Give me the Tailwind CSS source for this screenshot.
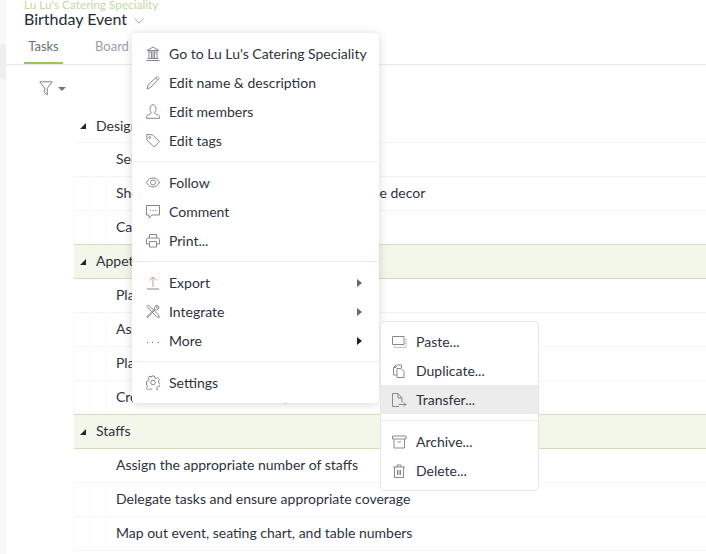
<!DOCTYPE html>
<html lang="en">
<head>
  <meta charset="UTF-8">
  <title>Birthday Event</title>
  <script src="https://cdn.jsdelivr.net/npm/@tailwindcss/browser@4"></script>
</head>
<body class="bg-white overflow-hidden font-['Lato','Noto_Sans',sans-serif] text-[14px] text-[#2c3340]">
  <div class="relative w-[706px] h-[554px] overflow-hidden flex">
    <!-- left strip -->
    <div class="w-[6px] h-full bg-[#f8f8f8] shrink-0 pt-[44px]">
      <div class="h-[35px] bg-[#eeeeee]"></div>
    </div>

    <div class="flex-1 min-w-0">
      <!-- header -->
      <div class="pl-[18px] h-[34px] relative">
        <div class="text-[11.8px] leading-[12px] text-[#c3d9a3] -mt-px">Lu Lu's Catering Speciality</div>
        <div class="flex items-center gap-[7px] text-[16px] leading-[20px] -mt-[2px] text-[#232a36]">
          <span>Birthday Event</span>
          <svg class="mt-[3px]" width="10" height="6" viewBox="0 0 10 6" fill="none" stroke="#9fb0c0" stroke-width="1"><path d="M.5.5 5 5 9.500.5"/></svg>
        </div>
      </div>

      <!-- tabs -->
      <div class="flex pl-[18px] h-[32px] border-b border-[#e9e9e9] text-[13px]">
        <div class="w-[39px] h-[31px] text-center leading-[26px] text-[#69707a] border-b-2 border-[#9ac558]">Tasks</div>
        <div class="ml-[32px] leading-[26px] text-[#9a9fae]">Board</div>
      </div>

      <!-- filter -->
      <div class="h-[44px] pl-[33px] pt-[16px] flex items-start gap-[5px]">
        <svg width="14" height="15" viewBox="0 0 14 15" fill="none" stroke="#7d828c" stroke-width="1"><path d="M.8.800h12.400L8.300 7.200v6.600L5.700 12V7.200z"/></svg>
        <svg class="mt-[6px]" width="8" height="4" viewBox="0 0 8 4" fill="#6f7480"><path d="M0 0h8L4 4z"/></svg>
      </div>

      <!-- task list -->
      <div class="ml-[68px]">
        <div class="flex items-center h-[34px] border-b border-[#f4f4f4]">
          <svg class="ml-[6px] mr-[10px]" width="6" height="6" viewBox="0 0 6 6" fill="#20262e"><path d="M6 0v6H0z"/></svg>
          <span>Design</span>
        </div>
        <div class="flex items-center h-[34px] border-b border-[#f4f4f4]"><span class="ml-[42px] -mt-[2px]">Select the event theme</span></div>
        <div class="flex items-center h-[34px] border-b border-[#f4f4f4]"><div class="w-[17px] h-[31px] self-end border-x border-[#f8f8f8]"></div><div class="w-[16px] h-[31px] self-end border-r border-[#f8f8f8]"></div><span class="ml-[9px] -mt-[2px]">Shop for table settings, linens and any of the decor</span></div>
        <div class="flex items-center h-[33px]"><div class="w-[17px] h-[31px] self-end border-x border-[#f8f8f8]"></div><div class="w-[16px] h-[31px] self-end border-r border-[#f8f8f8]"></div><span class="ml-[9px] -mt-[2px]">Call the florist</span></div>

        <div class="flex items-center h-[35px] bg-[#f2f7ea] border-y border-[#cfe0b5]">
          <svg class="ml-[6px] mr-[10px]" width="6" height="6" viewBox="0 0 6 6" fill="#20262e"><path d="M6 0v6H0z"/></svg>
          <span class="-mt-[2px]">Appetizers</span>
        </div>
        <div class="flex items-center h-[34px] border-b border-[#f4f4f4]"><span class="ml-[42px] -mt-[2px]">Plan the menu</span></div>
        <div class="flex items-center h-[34px] border-b border-[#f4f4f4]"><div class="w-[17px] h-[31px] self-end border-x border-[#f8f8f8]"></div><div class="w-[16px] h-[31px] self-end border-r border-[#f8f8f8]"></div><span class="ml-[9px] -mt-[2px]">Assign the cooks</span></div>
        <div class="flex items-center h-[34px] border-b border-[#f4f4f4]"><div class="w-[17px] h-[31px] self-end border-x border-[#f8f8f8]"></div><div class="w-[16px] h-[31px] self-end border-r border-[#f8f8f8]"></div><span class="ml-[9px] -mt-[2px]">Plate the food</span></div>
        <div class="flex items-center h-[33px]"><div class="w-[17px] h-[31px] self-end border-x border-[#f8f8f8]"></div><div class="w-[16px] h-[31px] self-end border-r border-[#f8f8f8]"></div><span class="ml-[9px] -mt-[2px]">Create the bar and wine list, with more</span></div>

        <div class="flex items-center h-[35px] bg-[#f2f7ea] border-y border-[#cfe0b5]">
          <svg class="ml-[6px] mr-[10px]" width="6" height="6" viewBox="0 0 6 6" fill="#20262e"><path d="M6 0v6H0z"/></svg>
          <span class="-mt-[2px]">Staffs</span>
        </div>
        <div class="flex items-center h-[34px] border-b border-[#f4f4f4]"><span class="ml-[42px] -mt-[2px]">Assign the appropriate number of staffs</span></div>
        <div class="flex items-center h-[34px] border-b border-[#f4f4f4]"><div class="w-[17px] h-[31px] self-end border-x border-[#f8f8f8]"></div><div class="w-[16px] h-[31px] self-end border-r border-[#f8f8f8]"></div><span class="ml-[9px] -mt-[2px]">Delegate tasks and ensure appropriate coverage</span></div>
        <div class="flex items-center h-[34px] border-b border-[#f4f4f4]"><div class="w-[17px] h-[31px] self-end border-x border-[#f8f8f8]"></div><div class="w-[16px] h-[31px] self-end border-r border-[#f8f8f8]"></div><span class="ml-[9px] -mt-[2px]">Map out event, seating chart, and table numbers</span></div>
      </div>
    </div>

    <!-- main menu -->
    <div class="absolute left-[132px] top-[33px] w-[247px] h-[370px] bg-white rounded-[4px] shadow-[0_1px_10px_rgba(0,0,0,0.16)] pt-[6px]">
      <div class="flex items-center h-[29px]">
        <svg class="ml-[14px] mr-[9px]" width="14" height="15" viewBox="0 0 14 15" fill="none" stroke="#85898f" stroke-width="1"><path d="M1 4.500 7 1l6 3.500zM2 6h10M3 6v6M5.500 6v6M8.500 6v6M11 6v6M1.500 12.500h11M.5 14.500h13"/><path stroke="#a7759a" d="M7 7v5"/></svg>
        <span>Go to Lu Lu's Catering Speciality</span>
      </div>
      <div class="flex items-center h-[29px]">
        <svg class="ml-[14px] mr-[9px]" width="14" height="15" viewBox="0 0 14 15" fill="none" stroke="#85898f" stroke-width="1"><path d="M11 1.500 13 3.500 4.500 12.500 1 14l1-3.800zM9.500 3l2 2"/></svg>
        <span>Edit name &amp; description</span>
      </div>
      <div class="flex items-center h-[29px]">
        <svg class="ml-[14px] mr-[9px]" width="14" height="15" viewBox="0 0 14 15" fill="none" stroke="#85898f" stroke-width="1"><path d="M4 5c0-2.600 1.300-4.300 3-4.300S10 2.400 10 5c0 2-1.300 2.800-1.300 4 0 1.500 4.800 1.300 4.800 3.500v1.800H.5v-1.800C.5 10.300 5.300 10.500 5.300 9 5.300 7.800 4 7 4 5z"/></svg>
        <span>Edit members</span>
      </div>
      <div class="flex items-center h-[29px]">
        <svg class="ml-[14px] mr-[9px]" width="14" height="15" viewBox="0 0 14 15" fill="none" stroke="#85898f" stroke-width="1"><path d="M.7 1.500 6.500 1.800l7 6.700-5.200 5.500-7.300-7z"/><circle cx="3.700" cy="4.500" r="1"/></svg>
        <span>Edit tags</span>
      </div>
      <div class="h-[7px] mb-[6px] border-b border-[#ededed]"></div>

      <div class="flex items-center h-[29px]">
        <svg class="ml-[14px] mr-[9px]" width="14" height="15" viewBox="0 0 14 15" fill="none" stroke="#85898f" stroke-width="1"><path d="M.5 7.500C2.200 4.500 4.400 3 7 3s4.800 1.500 6.500 4.500C11.800 10.500 9.600 12 7 12S2.200 10.500.5 7.500z"/><circle cx="7" cy="7.500" r="2.500"/></svg>
        <span>Follow</span>
      </div>
      <div class="flex items-center h-[29px]">
        <svg class="ml-[14px] mr-[9px]" width="14" height="15" viewBox="0 0 14 15" fill="none" stroke="#85898f" stroke-width="1"><path d="M.5 1.500h13v9.500H6L3 14v-3H.5z"/><path stroke-dasharray="1 1.500" d="M4 6.500h6.500"/></svg>
        <span>Comment</span>
      </div>
      <div class="flex items-center h-[29px]">
        <svg class="ml-[14px] mr-[9px]" width="14" height="15" viewBox="0 0 14 15" fill="none" stroke="#85898f" stroke-width="1"><path d="M3.500 5V1.500h7V5M3.500 11H.5V6.500Q.5 5 2 5h10q1.500 0 1.500 1.500V11h-3M3.500 8.500h7v5.500h-7z"/></svg>
        <span>Print...</span>
      </div>
      <div class="h-[7px] mb-[6px] border-b border-[#ededed]"></div>

      <div class="flex items-center h-[29px] relative">
        <svg class="ml-[14px] mr-[9px]" width="14" height="15" viewBox="0 0 14 15" fill="none" stroke="#85898f" stroke-width="1"><path stroke="#b5a58f" d="M7 12V2M3.500 5.500 7 2l3.500 3.500"/><path d="M1 14h12"/></svg>
        <span>Export</span>
        <svg class="absolute left-[225px] top-[11px]" width="5" height="8" viewBox="0 0 5 8" fill="#626a76"><path d="M0 0l5 4-5 4z"/></svg>
      </div>
      <div class="flex items-center h-[29px] relative">
        <svg class="ml-[14px] mr-[9px]" width="14" height="15" viewBox="0 0 14 15" fill="none" stroke="#85898f" stroke-width="1"><path d="M1 2.500 2.500 1l10 9.800.8 2.700-2.700-.8zM1.500 12l7-7c-.5-2 1-4 3.300-3.700L10.300 3l.9 1 1.700-1.500c.3 2.300-1.700 3.800-3.700 3.300l-7 7.300zM.8 12.800l1.200 1.200"/></svg>
        <span>Integrate</span>
        <svg class="absolute left-[225px] top-[11px]" width="5" height="8" viewBox="0 0 5 8" fill="#626a76"><path d="M0 0l5 4-5 4z"/></svg>
      </div>
      <div class="flex items-center h-[29px] relative">
        <svg class="ml-[14px] mr-[9px]" width="14" height="15" viewBox="0 0 14 15" fill="#6f737a"><rect x="1" y="9" width="1" height="1"/><rect x="6" y="9" width="1" height="1"/><rect x="12" y="9" width="1" height="1"/></svg>
        <span>More</span>
        <svg class="absolute left-[225px] top-[11px]" width="5" height="8" viewBox="0 0 5 8" fill="#1c2230"><path d="M0 0l5 4-5 4z"/></svg>
      </div>
      <div class="h-[7px] mb-[6px] border-b border-[#ededed]"></div>

      <div class="flex items-center h-[29px]">
        <svg class="ml-[14px] mr-[9px]" width="14" height="15" viewBox="0 0 14 15" fill="none" stroke="#85898f" stroke-width="1"><path d="M5.700 1h2.600l.4 1.900 1.500.7 1.700-1 1.700 2-1.200 1.500.3 1.700 1.700.9-.5 2.500-2 .1-1 1.400.5 1.900-2.300 1H6.700l-1.300-1.500-1.700-.2-1.500 1.200-1.800-1.800 1-1.700-.6-1.600L.5 9V6.500l1.900-.7.700-1.600-.9-1.700L4 1.200l1.500 1z"/><circle cx="7" cy="7.500" r="2.300"/></svg>
        <span>Settings</span>
      </div>
    </div>

    <!-- sub menu -->
    <div class="absolute left-[380px] top-[321px] w-[159px] h-[170px] bg-white rounded-[4px] border border-[#e6e6e6] pt-[5px]">
      <div class="flex items-center h-[29px]">
        <svg class="ml-[11px] mr-[9px] shrink-0" width="15" height="14" viewBox="0 0 15 14" fill="none" stroke="#85898f" stroke-width="1"><path d="M.5 1.500h11.500v8H.5z"/><path stroke-dasharray="1 1" d="M14 4v8.500H2.500v-1.500"/></svg>
        <span>Paste...</span>
      </div>
      <div class="flex items-center h-[29px]">
        <svg class="ml-[11px] mr-[9px] shrink-0" width="15" height="14" viewBox="0 0 15 14" fill="none" stroke="#85898f" stroke-width="1"><path d="M5 1h4.500v3M1.500 3.500 4 1v2.500zM1.500 3.500V11H5M5 4.500h4l3 3v6H5z"/></svg>
        <span>Duplicate...</span>
      </div>
      <div class="flex items-center h-[29px] bg-[#ececec]">
        <svg class="ml-[11px] mr-[9px] shrink-0" width="15" height="14" viewBox="0 0 15 14" fill="none" stroke="#85898f" stroke-width="1"><path d="M10 9.500V5L6 .5H.5v13H7M6 .5V5h4M6.500 11.500h7.500M12 9.500l2 2-2 2"/></svg>
        <span>Transfer...</span>
      </div>
      <div class="h-[7px] mb-[6px] border-b border-[#ededed]"></div>
      <div class="flex items-center h-[29px]">
        <svg class="ml-[11px] mr-[9px] shrink-0" width="15" height="14" viewBox="0 0 15 14" fill="none" stroke="#85898f" stroke-width="1"><path d="M.5 1h13.500v3H.5zM2 4v9h10.500V4M5.500 7h3.500"/></svg>
        <span>Archive...</span>
      </div>
      <div class="flex items-center h-[29px]">
        <svg class="ml-[11px] mr-[9px] shrink-0" width="15" height="14" viewBox="0 0 15 14" fill="none" stroke="#85898f" stroke-width="1"><path d="M1 3h12M5 3V1h4v2M2.500 3v10.500h9V3M5.500 6v5M7 6v5M8.500 6v5"/></svg>
        <span>Delete...</span>
      </div>
    </div>
  </div>
</body>
</html>
